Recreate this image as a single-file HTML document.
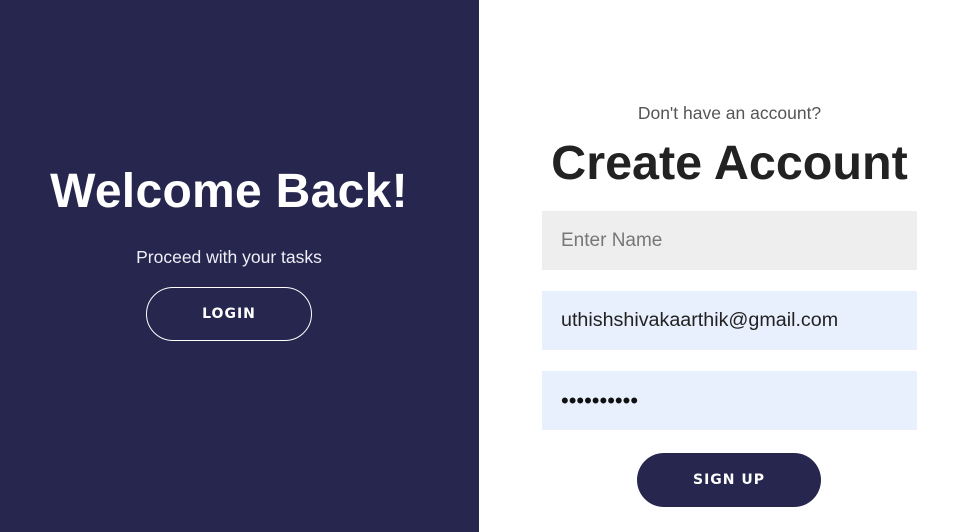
<!DOCTYPE html>
<html><head><meta charset="utf-8"><style>
*{margin:0;padding:0;box-sizing:border-box}
body{width:972px;height:532px;overflow:hidden;font-family:"DejaVu Sans","Liberation Sans",sans-serif;background:#fff;position:relative}
.left{position:absolute;left:0;top:0;width:479px;height:532px;background:#26264e;color:#fff}
.abs{position:absolute;white-space:nowrap}
.btn{position:absolute;border-radius:28px;display:flex;align-items:center;justify-content:center;font-weight:bold;font-size:14px;letter-spacing:1px;color:#fff}
.inp{position:absolute;left:542px;width:375px;height:59px;padding-left:19px;display:flex;align-items:center;font-size:19px}
</style></head><body>
<div class="left">
<div class="abs" style="left:0;width:458px;text-align:center;top:164px;font-size:48px;font-weight:bold;letter-spacing:0.3px;font-family:'Liberation Sans',sans-serif">Welcome Back!</div>
<div class="abs" style="left:0;width:458px;text-align:center;top:247px;font-size:17.5px;font-family:'Liberation Sans',sans-serif;color:#f0eef8">Proceed with your tasks</div>
<div class="btn" style="left:146px;top:287px;width:166px;height:54px;border:1px solid #fff">LOGIN</div>
</div>
<div class="abs" style="left:542px;width:375px;text-align:center;top:103px;font-size:17.5px;color:#555;font-family:'Liberation Sans',sans-serif">Don't have an account?</div>
<div class="abs" style="left:542px;width:375px;text-align:center;top:135px;font-size:48.5px;font-weight:bold;color:#222;font-family:'Liberation Sans',sans-serif;letter-spacing:0px">Create Account</div>
<div class="inp" style="top:211px;background:#eeeeee;color:#777;font-family:'Liberation Sans',sans-serif">Enter Name</div>
<div class="inp" style="top:291px;background:#e8f0fe;color:#222;font-family:'Liberation Sans',sans-serif;font-size:19.7px">uthishshivakaarthik@gmail.com</div>
<div class="inp" style="top:371px;background:#e8f0fe;color:#111;font-size:22px;letter-spacing:0px;font-family:'Liberation Sans',sans-serif">••••••••••</div>
<div class="btn" style="left:637px;top:453px;width:184px;height:54px;background:#26264e">SIGN UP</div>
</body></html>
